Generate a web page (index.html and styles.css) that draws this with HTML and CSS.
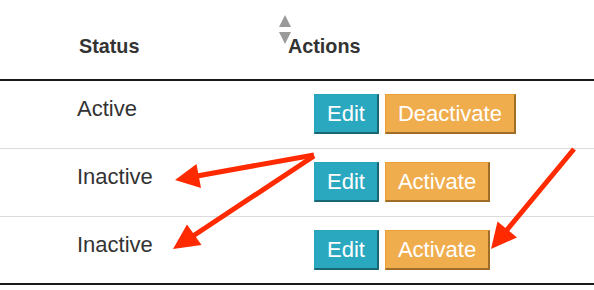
FILE: index.html
```html
<!DOCTYPE html>
<html>
<head>
<meta charset="utf-8">
<link rel="stylesheet" href="styles.css">
</head>
<body>
<div class="table">
  <div class="head">
    <div class="th th-status">Status
      <svg class="sort" width="14" height="32" viewBox="0 0 14 32">
        <polygon points="6,0 12,12 0,12" fill="#9a9a9a"/>
        <polygon points="0,17 12,17 6,29" fill="#9a9a9a"/>
      </svg>
    </div>
    <div class="th th-actions">Actions</div>
  </div>
  <div class="row">
    <div class="td td-status">Active</div>
    <div class="td td-actions"><span class="btn btn-info">Edit</span><span class="btn btn-warn">Deactivate</span></div>
  </div>
  <div class="row">
    <div class="td td-status">Inactive</div>
    <div class="td td-actions"><span class="btn btn-info">Edit</span><span class="btn btn-warn">Activate</span></div>
  </div>
  <div class="row last">
    <div class="td td-status">Inactive</div>
    <div class="td td-actions"><span class="btn btn-info">Edit</span><span class="btn btn-warn">Activate</span></div>
  </div>
</div>
<svg class="arrows" width="594" height="290" viewBox="0 0 594 290">
  <g stroke="#ff2a00" stroke-width="5" fill="#ff2a00">
    <line x1="314" y1="155" x2="197" y2="176"/>
    <polygon stroke="none" points="175,180 196.5,164 201,188"/>
    <line x1="314" y1="156" x2="193" y2="236"/>
    <polygon stroke="none" points="173,249 187,224.5 201.5,245"/>
    <line x1="574" y1="149" x2="506" y2="231"/>
    <polygon stroke="none" points="491,249 497.5,221.5 517,237.5"/>
  </g>
</svg>
</body>
</html>
```

FILE: styles.css
```css
html, body {
  margin: 0;
  padding: 0;
  background: #fff;
}
body {
  width: 594px;
  height: 290px;
  position: relative;
  overflow: hidden;
  font-family: "Liberation Sans", Arial, sans-serif;
  color: #333;
}
.table {
  width: 594px;
}
.head {
  display: grid;
  grid-template-columns: 288px 1fr;
  height: 79px;
  border-bottom: 2px solid #1a1a1a;
  box-sizing: content-box;
}
.th {
  font-weight: bold;
  font-size: 19.8px;
  line-height: 24px;
  padding-top: 34px;
}
.th-status {
  padding-left: 79px;
  position: relative;
}
.sort {
  position: absolute;
  left: 279px;
  top: 15px;
}
.row {
  display: grid;
  grid-template-columns: 314px 1fr;
  height: 67px;
  border-bottom: 1px solid #dcdcdc;
  box-sizing: content-box;
}
.row.last {
  height: 66px;
  border-bottom: 2px solid #1a1a1a;
}
.td {
  font-size: 22px;
  padding-top: 13px;
}
.td-status {
  padding-left: 77px;
  line-height: 30px;
}
.td-actions {
  display: flex;
  gap: 6px;
  align-items: flex-start;
}
.btn {
  display: inline-block;
  box-sizing: border-box;
  height: 40px;
  line-height: 37px;
  padding: 0 12px;
  color: #fff;
  border-style: solid;
  border-width: 1px 2px 2px 1px;
}
.btn-info {
  background: #29a8bf;
  border-color: #27a2b8 #1b6673 #1b6673 #27a2b8;
}
.btn-warn {
  background: #f0ad4e;
  border-color: #eca034 #a06d28 #a06d28 #eca034;
}
.arrows {
  position: absolute;
  left: 0;
  top: 0;
  pointer-events: none;
}
```
